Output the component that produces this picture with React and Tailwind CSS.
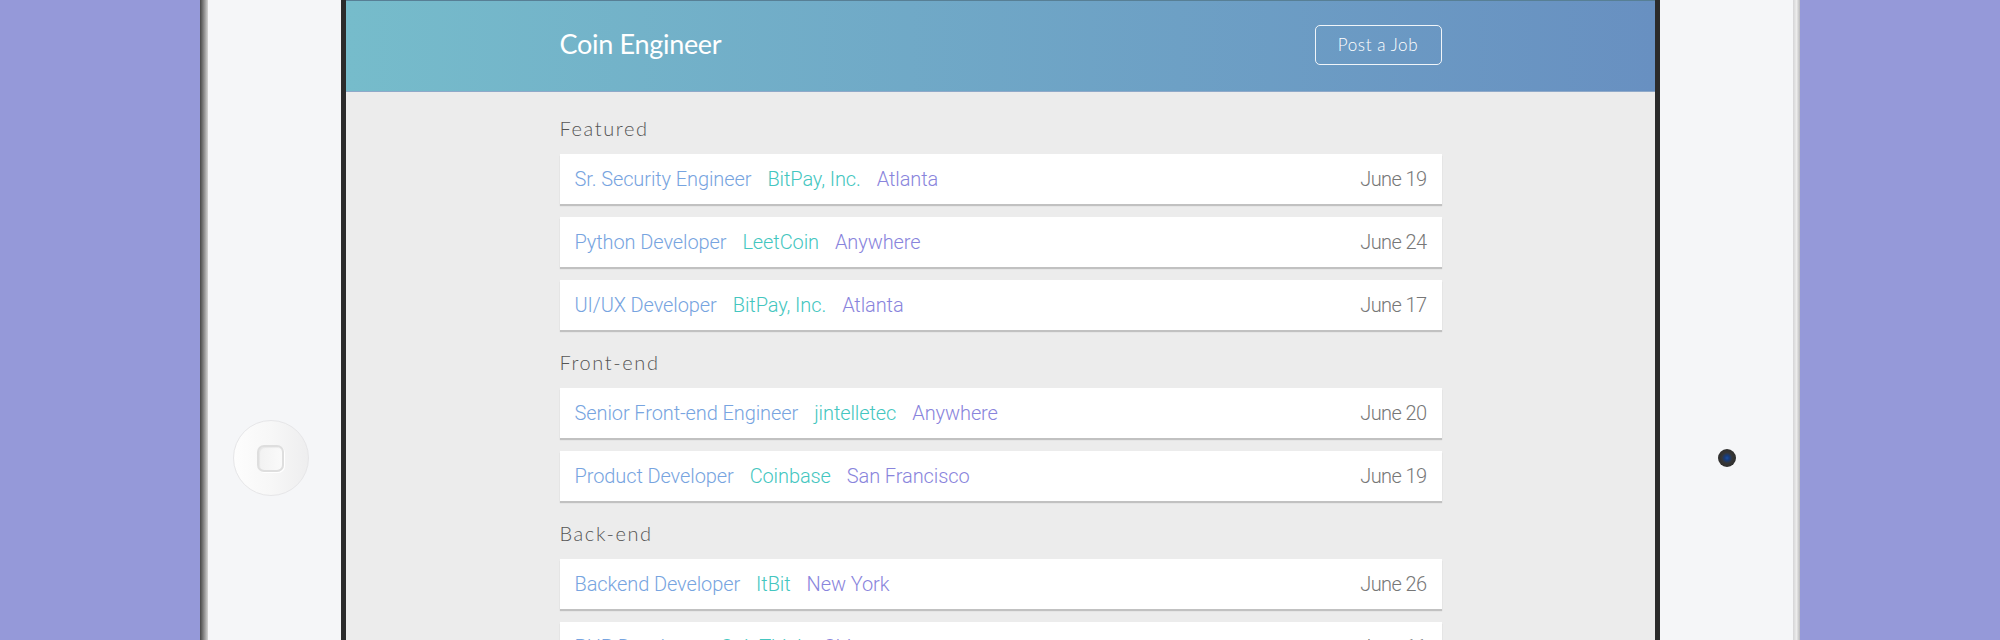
import React from "react";

const sections = [
  {
    name: "Featured",
    jobs: [
      { title: "Sr. Security Engineer", company: "BitPay, Inc.", location: "Atlanta", date: "June 19" },
      { title: "Python Developer", company: "LeetCoin", location: "Anywhere", date: "June 24" },
      { title: "UI/UX Developer", company: "BitPay, Inc.", location: "Atlanta", date: "June 17" },
    ],
  },
  {
    name: "Front-end",
    jobs: [
      { title: "Senior Front-end Engineer", company: "jintelletec", location: "Anywhere", date: "June 20" },
      { title: "Product Developer", company: "Coinbase", location: "San Francisco", date: "June 19" },
    ],
  },
  {
    name: "Back-end",
    jobs: [
      { title: "Backend Developer", company: "ItBit", location: "New York", date: "June 26" },
      { title: "PHP Developer", company: "CoinThink", location: "Chicago", date: "June 11" },
    ],
  },
];

const JobRow = ({ job }) => (
  <div className="h-[50px] shrink-0 bg-white flex items-center justify-between px-[15px] shadow-[0_2px_1px_rgba(0,0,0,0.18)] font-['Roboto',sans-serif] font-light text-[20px] leading-[24px]">
    <div className="flex items-center gap-[16px] tracking-[-0.1px]">
      <span className="text-[#77a4e0]">{job.title}</span>
      <span className="text-[#44c6c0]">{job.company}</span>
      <span className="text-[#8984dc]">{job.location}</span>
    </div>
    <span className="text-[#777] tracking-[-0.6px]">{job.date}</span>
  </div>
);

const App = () => {
  return (
    <div className="flex h-[640px] w-[2000px] overflow-hidden bg-[#9599d9]">
      <div className="w-[200px] shrink-0" />

      {/* left bezel */}
      <div className="w-[8px] shrink-0 bg-linear-to-r from-[#474747] via-[#8c8c8c] to-[#d6d6d6]" />
      <div className="w-[133px] shrink-0 bg-[#f5f6f8] flex justify-center pt-[276px] pr-[8px] items-center">
        <div className="w-[76px] h-[76px] rounded-full border border-[#e6e6e8] bg-linear-to-r from-[#fdfdfd] via-[#f7f7f7] to-[#eeeeef] flex items-center justify-center">
          <div className="w-[27px] h-[27px] rounded-[7px] border-2 border-[#dedede] bg-linear-to-r from-[#f2f2f2] to-[#fafafa] shadow-[inset_1px_1px_1px_rgba(0,0,0,0.05),1px_1px_0_#fff]" />
        </div>
      </div>
      <div className="w-[5px] shrink-0 bg-[#2b2b2b]" />

      {/* screen */}
      <div className="w-[1309px] shrink-0 bg-[#ececec] flex flex-col">
        <header className="h-[92px] shrink-0 border-t border-[#577f95] border-b border-b-[#8fa9c9] bg-linear-to-r from-[#76bccb] to-[#6890c1]">
          <div className="w-[882px] mx-auto h-full flex items-center justify-between">
            <h1 className="font-['Lato',sans-serif] text-[27px] tracking-[-0.3px] text-white leading-none pb-[6px]">
              Coin Engineer
            </h1>
            <button className="w-[127px] h-[40px] mb-[2px] rounded-[5px] border-[1.5px] border-white/90 text-white font-['Lato',sans-serif] font-light text-[17px] tracking-[0.6px]">
              Post a Job
            </button>
          </div>
        </header>

        <main className="w-[882px] mx-auto pt-[24px] flex flex-col gap-[20px]">
          {sections.map((section) => (
            <section key={section.name} className="flex flex-col">
              <h2 className="h-[24px] mb-[14px] font-['Lato',sans-serif] font-light text-[20px] leading-[24px] tracking-[1.6px] text-[#555]">
                {section.name}
              </h2>
              <div className="flex flex-col gap-[13px]">
                {section.jobs.map((job) => (
                  <JobRow key={job.title} job={job} />
                ))}
              </div>
            </section>
          ))}
        </main>
      </div>

      {/* right bezel */}
      <div className="w-[5px] shrink-0 bg-[#2b2b2b]" />
      <div className="w-[133px] shrink-0 bg-[#f5f6f8] flex justify-center items-center pt-[276px]">
        <div className="w-[18px] h-[18px] rounded-full bg-[radial-gradient(circle,#1d4fa0_0,#173c7c_18%,#363636_42%,#262626_100%)]" />
      </div>
      <div className="w-[7px] shrink-0 bg-linear-to-r from-[#d4d4d6] via-[#ececec] to-[#b9b9bb]" />
      <div className="flex-1" />
    </div>
  );
};

export default App;
